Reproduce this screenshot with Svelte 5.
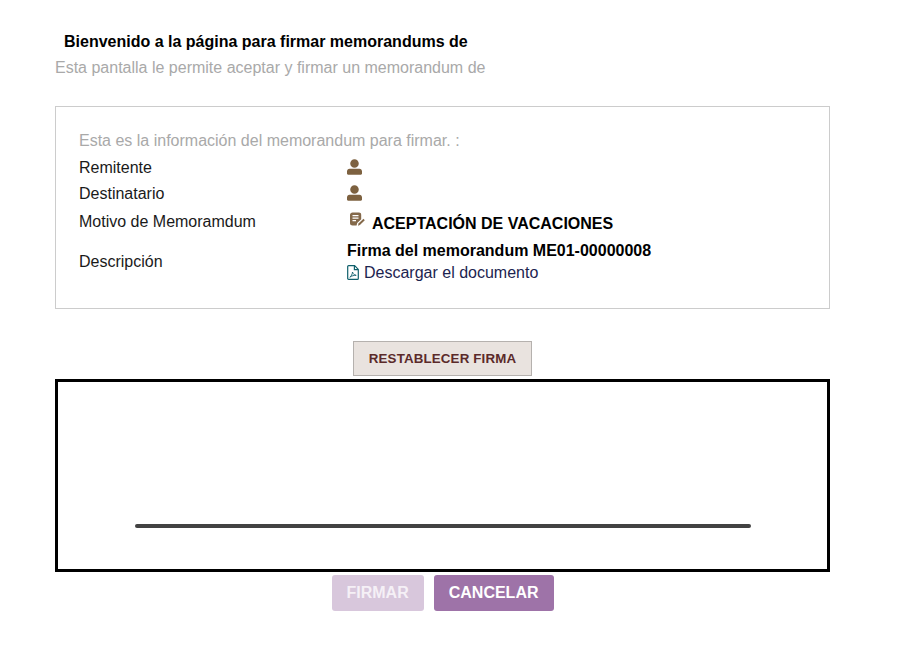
<script>
  const userIcon = "M12 1.500a5.700 5.700 0 1 1 0 11.400a5.700 5.700 0 0 1 0-11.400zM5.500 14h13c2.200 0 3.500 1.600 3.500 3.600v3c0 .9-.6 1.500-1.500 1.500h-17C2.600 22.100 2 21.500 2 20.600v-3C2 15.600 3.300 14 5.500 14z";
</script>

<div class="page">
  <h1 class="title">Bienvenido a la página para firmar memorandums de</h1>
  <p class="subtitle">Esta pantalla le permite aceptar y firmar un memorandum de</p>

  <section class="info">
    <p class="intro">Esta es la información del memorandum para firmar. :</p>
    <div class="row r1">
      <span class="label">Remitente</span>
      <svg class="user" viewBox="2 1.500 20 20.600"><path d={userIcon} /></svg>
    </div>
    <div class="row r2">
      <span class="label">Destinatario</span>
      <svg class="user" viewBox="2 1.500 20 20.600"><path d={userIcon} /></svg>
    </div>
    <div class="row r3">
      <span class="label">Motivo de Memoramdum</span>
      <div class="motive">
        <svg class="memo" viewBox="1 1 15 14">
          <path d="M3.500 1h6.500c1.300 0 2.200.9 2.200 2.200v4.600L8.200 11.600 7.600 14H3.500C2.200 14 1 13 1 11.700V3.300C1 2 2.200 1 3.500 1z" />
          <path class="lines" d="M3.500 4.200h6M3.500 6.700h6M3.500 9.200h3.500" />
          <path class="pen" d="M9 14.200l.5-2.200 5-4.700 1.300 1.400-4.900 4.800z" />
        </svg>
        <strong>ACEPTACIÓN DE VACACIONES</strong>
      </div>
    </div>
    <div class="row r4">
      <span class="label">Descripción</span>
      <div class="desc">
        <strong>Firma del memorandum ME01-00000008</strong>
        <div class="download">
          <svg class="pdf" viewBox="0 0 12 15">
            <path class="outline" d="M1.600.7h6l3.700 3.700v9c0 .5-.4.900-.9.900H1.600c-.5 0-.9-.4-.9-.9V1.600c0-.5.4-.9.900-.9zM7.400.9v3.700h3.700" />
            <path class="outline thin" d="M2.800 12.200c1.500-1 2.500-3 2.700-5.200.6 2 1.600 3 3.700 3.300-2.200-.1-4.500.6-6.400 1.900z" />
          </svg>
          <span>Descargar el documento</span>
        </div>
      </div>
    </div>
  </section>

  <div class="reset-wrap">
    <button class="reset">RESTABLECER FIRMA</button>
  </div>

  <div class="pad">
    <div class="sign-line"></div>
  </div>

  <div class="actions">
    <button class="action disabled">FIRMAR</button>
    <button class="action">CANCELAR</button>
  </div>
</div>

<style>
  :global(body) {
    background: #fff;
  }
  .page {
    width: 775px;
    padding: 33px 0 0 55px;
    font-family: "Liberation Sans", Arial, sans-serif;
    font-size: 16px;
    color: #000;
  }
  .title {
    margin: 0 0 0 9px;
    font-size: 16px;
    line-height: 18px;
    font-weight: bold;
    color: #000;
  }
  .subtitle {
    margin: 5px 0 0;
    line-height: 24px;
    color: #a9a9a9;
  }
  .info {
    box-sizing: border-box;
    height: 203px;
    margin-top: 26px;
    padding: 22px 23px 0;
    border: 1px solid #ccc;
  }
  .intro {
    margin: 0;
    line-height: 24px;
    color: #a9a9a9;
  }
  .row {
    display: grid;
    grid-template-columns: 268px 1fr;
    align-items: center;
    color: #1a1a1a;
  }
  .r1 { height: 26px; margin-top: 2px; }
  .r2 { height: 26px; }
  .r3 { height: 28px; margin-top: 1px; }
  .r4 { height: 50px; margin-top: 1px; }
  .user {
    align-self: start;
    width: 15px;
    height: 16px;
    margin-top: 4px;
    fill: #7d6140;
  }
  .motive {
    display: flex;
    align-items: flex-end;
    gap: 7px;
    padding-left: 3px;
  }
  .motive strong {
    color: #000;
    line-height: 18px;
  }
  .memo {
    width: 15px;
    height: 15px;
    margin-bottom: 6px;
    fill: #84694a;
  }
  .memo .lines {
    fill: none;
    stroke: #fff;
    stroke-width: 1.200;
  }
  .desc {
    padding-top: 2px;
  }
  .desc strong {
    display: block;
    line-height: 20px;
    color: #000;
  }
  .download {
    display: flex;
    align-items: center;
    gap: 5px;
    line-height: 24px;
    color: #1c2450;
  }
  .pdf {
    width: 12px;
    height: 15px;
    margin-bottom: 2px;
  }
  .outline {
    fill: none;
    stroke: #0f5f6b;
    stroke-width: 1.200;
  }
  .outline.thin {
    stroke-width: 0.900;
  }
  .reset-wrap {
    display: flex;
    justify-content: center;
    margin-top: 32px;
  }
  .reset {
    box-sizing: border-box;
    width: 179px;
    height: 35px;
    padding: 0;
    border: 1px solid #b5b1ae;
    background: #e9e3df;
    color: #5b2a2a;
    font: bold 13.333px "Liberation Sans", Arial, sans-serif;
    letter-spacing: 0.150px;
  }
  .pad {
    box-sizing: border-box;
    display: flex;
    justify-content: center;
    height: 193px;
    margin-top: 3px;
    padding-top: 142px;
    border: 3px solid #000;
  }
  .sign-line {
    width: 616px;
    height: 4px;
    border-radius: 2px;
    background: #424242;
  }
  .actions {
    display: flex;
    justify-content: center;
    gap: 10px;
    margin-top: 3px;
  }
  .action {
    height: 36px;
    padding: 0 15px;
    border: 0;
    border-radius: 3px;
    background: #9e73a8;
    color: #fff;
    font: bold 16px "Liberation Sans", Arial, sans-serif;
  }
  .action.disabled {
    background: #d8c7dc;
    color: #f5f0f6;
  }
</style>
